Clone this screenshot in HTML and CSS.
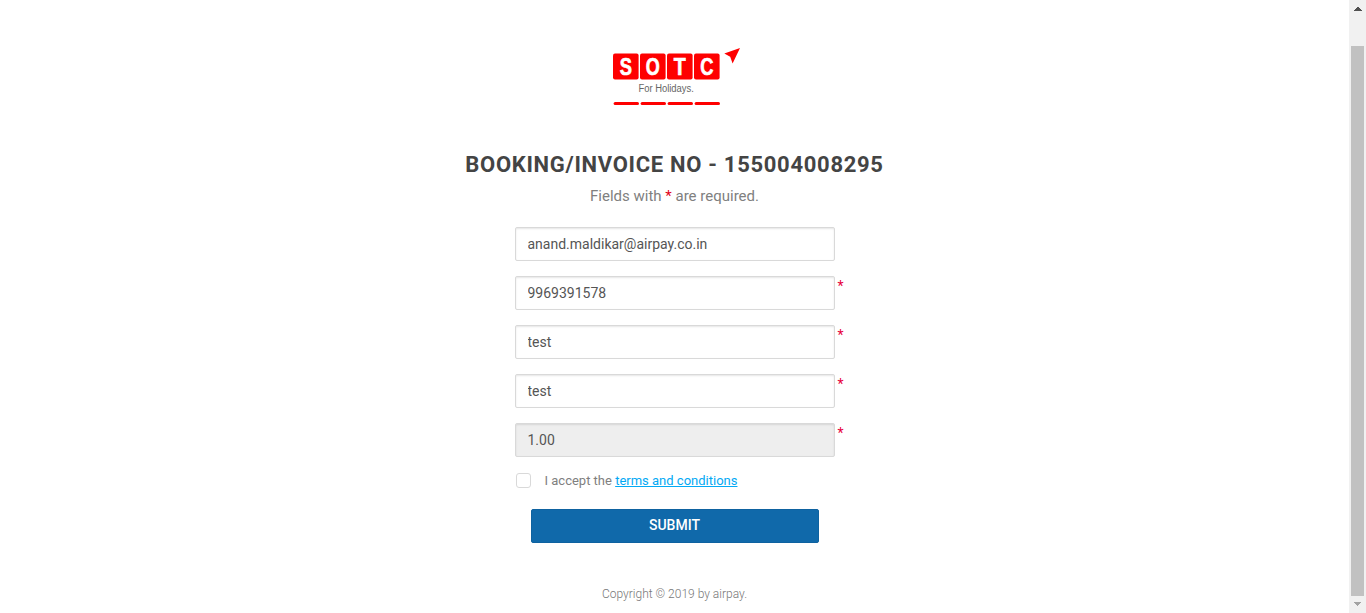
FILE: index.html
```html
<!DOCTYPE html>
<html lang="en">
<head>
<meta charset="utf-8">
<title>Booking payment</title>
<link rel="stylesheet" href="styles.css">
</head>
<body>
<div class="page">
  <main class="content">
    <svg class="logo" width="130" height="60" viewBox="0 0 130 60" role="img" aria-label="SOTC For Holidays.">
      <g fill="#fe0000">
        <rect x="1" y="6.4" width="25.6" height="26" rx="2"/>
        <rect x="28" y="6.4" width="25.6" height="26" rx="2"/>
        <rect x="55" y="6.4" width="25.6" height="26" rx="2"/>
        <rect x="82" y="6.4" width="25.6" height="26" rx="2"/>
        <rect x="1.6" y="55" width="25.4" height="3" rx="1.5"/>
        <rect x="28.6" y="55" width="25.4" height="3" rx="1.5"/>
        <rect x="55.6" y="55" width="25.4" height="3" rx="1.5"/>
        <rect x="82.6" y="55" width="25.4" height="3" rx="1.5"/>
        <path d="M128 1L112.3 6.6L118.2 9.8L120.6 16.6Z"/>
      </g>
      <g class="logo-letters">
        <text x="7.7" y="28" textLength="12.2" lengthAdjust="spacingAndGlyphs">S</text>
        <text x="33.8" y="28" textLength="14" lengthAdjust="spacingAndGlyphs">O</text>
        <text x="61.8" y="28" textLength="12" lengthAdjust="spacingAndGlyphs">T</text>
        <text x="88.2" y="28" textLength="13.2" lengthAdjust="spacingAndGlyphs">C</text>
      </g>
      <text class="logo-tag" x="26.4" y="45" textLength="55.5" lengthAdjust="spacingAndGlyphs">For Holidays.</text>
    </svg>
    <h1 class="title">BOOKING/INVOICE NO - 155004008295</h1>
    <p class="hint">Fields with <span class="star">*</span> are required.</p>
    <form class="form">
      <div class="field"><input class="input" type="text" value="anand.maldikar@airpay.co.in" aria-label="Email"></div>
      <div class="field"><input class="input" type="text" value="9969391578" aria-label="Phone"><span class="required">*</span></div>
      <div class="field"><input class="input" type="text" value="test" aria-label="First name"><span class="required">*</span></div>
      <div class="field"><input class="input" type="text" value="test" aria-label="Last name"><span class="required">*</span></div>
      <div class="field"><input class="input input-readonly" type="text" value="1.00" readonly aria-label="Amount"><span class="required">*</span></div>
      <label class="terms"><input class="check" type="checkbox"><span>I accept the <a class="link" href="#">terms and conditions</a></span></label>
      <button class="submit" type="button">SUBMIT</button>
    </form>
    <footer class="footer">Copyright © 2019 by airpay.</footer>
  </main>
  <div class="scrollbar">
    <svg width="17" height="17" shape-rendering="crispEdges"><path fill="#505050" d="M8 7h2v1h1v1h1v1h1v1H5v-1h1V9h1V8h1z"/></svg>
    <div class="thumb"></div>
    <svg width="17" height="17" shape-rendering="crispEdges"><path fill="#a3a3a3" d="M5 6h7v1h-1v1h-1v1H9v1H8V9H7V8H6V7H5z"/></svg>
  </div>
</div>
</body>
</html>
```
FILE: styles.css
```css
* { box-sizing: border-box; }
body { margin: 0; background: #fff; font-family: Roboto, sans-serif; color: #808080; }
.page { display: flex; height: 613px; overflow: hidden; }
.content { flex: 1; display: flex; flex-direction: column; align-items: center; padding-top: 47px; }
.logo { display: block; margin-left: 5px; }
.logo-letters { fill: #fff; stroke: #fff; stroke-width: 0.7; font: bold 23.4px "Liberation Sans", sans-serif; }
.logo-tag { fill: #666; font: 10px "Liberation Sans", sans-serif; }
.title { margin: 43px 0 0; font-size: 22px; line-height: 30px; font-weight: 700; letter-spacing: 0.7px; color: #444; white-space: nowrap; }
.hint { margin: 6px 0 0; font-size: 15px; line-height: 20px; }
.star { color: #e2001a; }
.form { width: 320px; margin: 21px 0 0; display: flex; flex-direction: column; }
.field { display: flex; width: 335px; height: 34px; margin-bottom: 15px; }
.input { width: 320px; height: 34px; flex: none; padding: 0 12px; border: 1px solid #d9d9d9; border-radius: 2px; box-shadow: inset 0 1px 2px rgba(0, 0, 0, 0.1); background: #fff; color: #555; font: 14px Roboto, sans-serif; outline: 0; }
.input-readonly { background: #eee; }
.required { margin-left: 3px; font-size: 14px; line-height: 20px; color: #e6003c; }
.terms { display: flex; align-items: center; gap: 14px; height: 17px; margin: 0 0 20px 1px; font-size: 13px; line-height: 17px; }
.check { appearance: none; width: 15px; height: 15px; margin: 0; border: 1px solid #d9d9d9; border-radius: 3px; background: #fff; }
.link { color: #03a9f4; text-decoration: underline; }
.submit { width: 288px; height: 34px; margin: 0 auto; padding: 0 0 2px; border: 1px solid #0e62a0; border-radius: 2px; background: #1069aa; color: #fff; font: 500 14px Roboto, sans-serif; }
.footer { margin-top: 42px; font-size: 12px; line-height: 18px; font-weight: 300; color: #777; }
.scrollbar { width: 17px; display: flex; flex-direction: column; align-items: center; background: #f1f1f1; }
.thumb { width: 13px; height: 550px; margin-top: 29px; background: #c1c1c1; }
```
